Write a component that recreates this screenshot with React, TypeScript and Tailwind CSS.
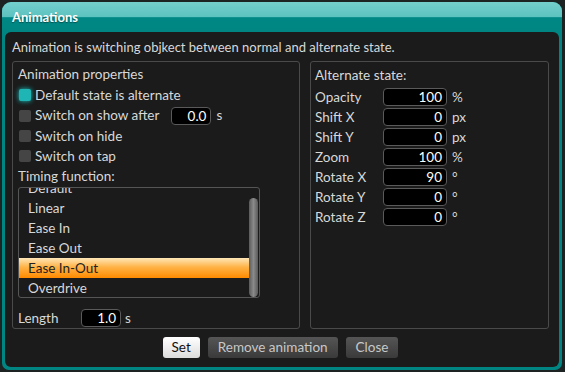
import React from 'react';

const FONT = { fontFamily: 'Lato, "Open Sans", sans-serif' };

const TIMING = ['Default', 'Linear', 'Ease In', 'Ease Out', 'Ease In-Out', 'Overdrive'];

const ALT_STATE = [
  { label: 'Opacity', value: '100', unit: '%' },
  { label: 'Shift X', value: '0', unit: 'px' },
  { label: 'Shift Y', value: '0', unit: 'px' },
  { label: 'Zoom', value: '100', unit: '%' },
  { label: 'Rotate X', value: '90', unit: '°' },
  { label: 'Rotate Y', value: '0', unit: '°' },
  { label: 'Rotate Z', value: '0', unit: '°' },
];

const Check: React.FC<{ checked?: boolean; label: string; tall?: boolean; children?: React.ReactNode }> = ({
  checked,
  label,
  tall,
  children,
}) => (
  <div className={`flex items-center ${tall ? 'h-[22px]' : 'h-[20px]'}`}>
    <span
      className={`w-[12px] h-[12px] rounded-[2px] ml-[1px] mr-[4px] ${
        checked ? 'bg-[#1fb5b5] shadow-[0_0_5px_#19c8c8]' : 'bg-[#454545]'
      }`}
    />
    <span>{label}</span>
    {children}
  </div>
);

const Field: React.FC<{ value: string; className?: string }> = ({ value, className }) => (
  <div
    className={`h-[18px] bg-black border border-[#5a5a5a] rounded-[4px] text-white text-right pr-[4px] leading-[16px] ${className ?? ''}`}
  >
    {value}
  </div>
);

export default function App() {
  return (
    <div className="w-[565px] h-[372px] bg-[#1d2222] p-[2px] text-[13px] text-[#d8d8d8]" style={FONT}>
      <div className="w-[560px] h-[368px] flex flex-col rounded-t-[9px] rounded-b-[7px] bg-[#008582]">
        {/* title */}
        <div className="h-[30px] rounded-t-[9px] bg-[linear-gradient(#74cfcc_0%,#5cc2bf_50%,#008885_52%,#008582_100%)] pl-[10px] pt-[6px]">
          <span className="text-white font-bold text-[13px] [text-shadow:0_1px_1px_rgba(0,0,0,0.4)]">Animations</span>
        </div>

        {/* body */}
        <div className="flex-1 mx-[3px] mb-[3px] rounded-[6px] bg-[#1b1b1b] flex flex-col pl-[7px] pr-[10px]">
          <div className="h-[29px] flex items-center pt-[3px]">
            Animation is switching objkect between normal and alternate state.
          </div>

          <div className="flex gap-[10px] h-[268px] text-[13.5px]">
            {/* left panel */}
            <div className="w-[288px] border border-[#4a4a4a] rounded-[3px] pl-[5px] pt-[3px] flex flex-col">
              <div className="h-[20px] leading-[18px]">Animation properties</div>
              <Check checked label="Default state is alternate" />
              <Check tall label="Switch on show after">
                <Field value="0.0" className="w-[40px] ml-[12px]" />
                <span className="ml-[5px]">s</span>
              </Check>
              <Check label="Switch on hide" />
              <Check label="Switch on tap" />
              <div className="h-[20px] leading-[20px]">Timing function:</div>

              <div className="relative w-[242px] h-[112px] border border-[#555] rounded-[3px] overflow-hidden mt-[1px]">
                <div className="-mt-[10px] pr-[10px]">
                  {TIMING.map((t) => (
                    <div
                      key={t}
                      className={`h-[20px] leading-[20px] pl-[9px] ${
                        t === 'Ease In-Out'
                          ? 'bg-[linear-gradient(#ffe7b8,#ffb347_45%,#ff8a00)] text-[#222]'
                          : ''
                      }`}
                    >
                      {t}
                    </div>
                  ))}
                </div>
                <div className="absolute right-[1px] top-[10px] w-[9px] h-[99px] rounded-[5px] bg-[linear-gradient(90deg,#5a5a5a,#8a8a8a_50%,#5a5a5a)]" />
              </div>

              <div className="flex items-center mt-[10px]">
                <span className="w-[63px]">Length</span>
                <Field value="1.0" className="w-[40px]" />
                <span className="ml-[4px]">s</span>
              </div>
            </div>

            {/* right panel */}
            <div className="w-[239px] border border-[#4a4a4a] rounded-[3px] pl-[4px] pt-[3px]">
              <div className="h-[22px] leading-[20px]">Alternate state:</div>
              {ALT_STATE.map((r) => (
                <div key={r.label} className="flex items-center h-[20px]">
                  <span className="w-[68px]">{r.label}</span>
                  <Field value={r.value} className="w-[64px]" />
                  <span className="ml-[5px]">{r.unit}</span>
                </div>
              ))}
            </div>
          </div>

          <div className="flex justify-center gap-[8px] mt-[8px] text-[13.5px]">
            <button className="h-[21px] px-[9px] rounded-[3px] bg-[linear-gradient(#ffffff,#dcdcdc)] text-[#111]">Set</button>
            <button className="h-[21px] px-[10px] rounded-[3px] bg-[linear-gradient(#555,#3a3a3a)] text-[#c8c8c8]">Remove animation</button>
            <button className="h-[21px] px-[10px] rounded-[3px] bg-[linear-gradient(#555,#3a3a3a)] text-[#c8c8c8]">Close</button>
          </div>
        </div>
      </div>
    </div>
  );
}
